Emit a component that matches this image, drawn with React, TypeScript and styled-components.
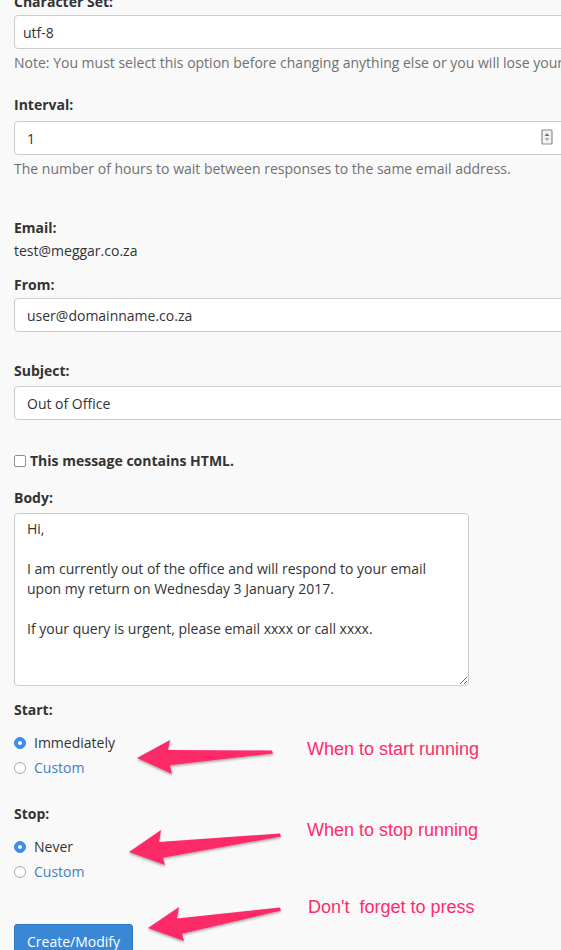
import React from 'react';
import styled, { createGlobalStyle } from 'styled-components';

const GlobalStyle = createGlobalStyle`
  html, body {
    margin: 0;
    padding: 0;
    background: #f9f9f9;
    overflow: hidden;
  }
  body {
    font-family: "Open Sans", "Liberation Sans", sans-serif;
    font-size: 14px;
    line-height: 20px;
    color: #333;
  }
  * { box-sizing: border-box; }
`;

const Page = styled.div`
  position: relative;
  width: 561px;
  height: 950px;
  overflow: hidden;
  padding: 0 0 0 14px;
`;

const Group = styled.div<{ $top?: number }>`
  margin-top: ${(p) => p.$top ?? 0}px;
`;

const Label = styled.div`
  font-weight: 700;
  font-size: 14px;
  line-height: 20px;
  color: #333;
`;

const FieldWrap = styled.div<{ $top?: number }>`
  position: relative;
  margin-top: ${(p) => p.$top ?? 1}px;
  width: 570px;
`;

const TextInput = styled.input<{ $pad?: number }>`
  display: block;
  width: 100%;
  height: 34px;
  padding: 0 ${(p) => p.$pad ?? 12}px;
  font-family: "Open Sans", "Liberation Sans", sans-serif;
  font-size: 14px;
  color: #333;
  background: #fff;
  border: 1px solid #ccc;
  border-radius: 4px;
  outline: none;
`;

const Spinner = styled.svg`
  position: absolute;
  left: 527px;
  top: 8px;
`;

const Help = styled.div<{ $top?: number }>`
  margin-top: ${(p) => p.$top ?? 4}px;
  color: #707070;
  white-space: nowrap;
`;

const Value = styled.div`
  margin-top: 3px;
  color: #333;
`;

const CheckRow = styled.label`
  display: flex;
  align-items: center;
  gap: 4px;
  font-weight: 700;
`;

const CheckBox = styled.span`
  display: inline-block;
  width: 12px;
  height: 12px;
  border: 1px solid #8f8f8f;
  border-radius: 2px;
  background: #fff;
`;

const BodyArea = styled.textarea`
  display: block;
  margin-top: 5px;
  width: 455px;
  height: 173px;
  padding: 5px 12px;
  font-family: "Open Sans", "Liberation Sans", sans-serif;
  font-size: 14px;
  line-height: 20px;
  color: #333;
  background: #fff;
  border: 1px solid #ccc;
  border-radius: 4px;
  resize: both;
  outline: none;
`;

const RadioList = styled.div<{ $top?: number }>`
  margin-top: ${(p) => p.$top ?? 13}px;
  display: flex;
  flex-direction: column;
  gap: 5px;
`;

const RadioRow = styled.label<{ $link?: boolean }>`
  display: flex;
  align-items: center;
  gap: 8px;
  color: ${(p) => (p.$link ? '#3d7ec2' : '#333')};
`;

const RadioDot = styled.span<{ $on?: boolean }>`
  display: inline-block;
  width: 12px;
  height: 12px;
  border-radius: 50%;
  background: ${(p) => (p.$on ? '#3b8ef0' : '#fff')};
  border: 1px solid ${(p) => (p.$on ? '#3b8ef0' : '#a8a8a8')};
  position: relative;
  &::after {
    content: '';
    display: ${(p) => (p.$on ? 'block' : 'none')};
    position: absolute;
    left: 3px;
    top: 3px;
    width: 4px;
    height: 4px;
    border-radius: 50%;
    background: #fff;
  }
`;

const Button = styled.button`
  display: block;
  margin-top: 42px;
  width: 119px;
  height: 34px;
  padding: 0;
  font-family: "Open Sans", "Liberation Sans", sans-serif;
  font-size: 14px;
  color: #fff;
  background: #3a87d5;
  border: 1px solid #2f78c2;
  border-radius: 3px;
`;

const Note = styled.div<{ $x: number; $y: number }>`
  position: absolute;
  left: ${(p) => p.$x}px;
  top: ${(p) => p.$y}px;
  font-family: "Liberation Sans", Arial, sans-serif;
  font-size: 18px;
  line-height: 20px;
  color: #fc2c6b;
  white-space: pre;
`;

const ArrowLayer = styled.svg`
  position: absolute;
  left: 0;
  top: 0;
  pointer-events: none;
`;

type ArrowProps = { tip: [number, number]; tail: [number, number]; up: [number, number]; down: [number, number] };

const Arrow = ({ tip, tail, up, down }: ArrowProps) => {
  // notch points sit a little inside the barbs, shaft tapers toward the tail
  const nx1 = up[0] - 2;
  const ny1 = up[1] + (tip[1] - up[1]) * 0.55;
  const nx2 = down[0] - 2;
  const ny2 = down[1] - (down[1] - tip[1]) * 0.55;
  const d = `M${tip[0]},${tip[1]} L${up[0]},${up[1]} L${nx1},${ny1} L${tail[0]},${tail[1] - 1.5} L${tail[0] + 1},${tail[1] + 1.5} L${nx2},${ny2} L${down[0]},${down[1]} Z`;
  return <path d={d} fill="#fd2a68" filter="url(#arrowShadow)" strokeLinejoin="round" />;
};

const App = () => (
  <>
    <GlobalStyle />
    <Page>
      <Group $top={-8}>
        <Label>Character Set:</Label>
        <FieldWrap $top={3}>
          <TextInput $pad={8} readOnly value="utf-8" />
        </FieldWrap>
        <Help>Note: You must select this option before changing anything else or you will lose your changes.</Help>
      </Group>

      <Group $top={22}>
        <Label>Interval:</Label>
        <FieldWrap $top={6}>
          <TextInput readOnly value="1" />
          <Spinner width="12" height="16" viewBox="0 0 12 16">
            <rect x="1" y="1" width="10" height="14" rx="1" fill="#f4f4f4" stroke="#8a8a8a" strokeWidth="1.2" />
            <path d="M6 4 L8.5 7 L3.5 7 Z" fill="#777" />
            <path d="M6 12 L8.5 9 L3.5 9 Z" fill="#aaa" />
          </Spinner>
        </FieldWrap>
        <Help>The number of hours to wait between responses to the same email address.</Help>
      </Group>

      <Group $top={39}>
        <Label>Email:</Label>
        <Value>test@meggar.co.za</Value>
      </Group>

      <Group $top={14}>
        <Label>From:</Label>
        <FieldWrap $top={3}>
          <TextInput readOnly value="user@domainname.co.za" />
        </FieldWrap>
      </Group>

      <Group $top={29}>
        <Label>Subject:</Label>
        <FieldWrap $top={5}>
          <TextInput readOnly value="Out of Office" />
        </FieldWrap>
      </Group>

      <Group $top={31}>
        <CheckRow>
          <CheckBox />
          This message contains HTML.
        </CheckRow>
      </Group>

      <Group $top={17}>
        <Label>Body:</Label>
        <BodyArea
          readOnly
          value={
            'Hi,\n\nI am currently out of the office and will respond to your email upon my return on Wednesday 3 January 2017.\n\nIf your query is urgent, please email xxxx or call xxxx.'
          }
        />
      </Group>

      <Group $top={14}>
        <Label>Start:</Label>
        <RadioList>
          <RadioRow>
            <RadioDot $on />
            Immediately
          </RadioRow>
          <RadioRow $link>
            <RadioDot />
            Custom
          </RadioRow>
        </RadioList>
      </Group>

      <Group $top={26}>
        <Label>Stop:</Label>
        <RadioList>
          <RadioRow>
            <RadioDot $on />
            Never
          </RadioRow>
          <RadioRow $link>
            <RadioDot />
            Custom
          </RadioRow>
        </RadioList>
      </Group>

      <Button>Create/Modify</Button>

      <ArrowLayer width="561" height="950" viewBox="0 0 561 950">
        <defs>
          <filter id="arrowShadow" x="-10%" y="-30%" width="120%" height="160%">
            <feDropShadow dx="0" dy="1.5" stdDeviation="1.2" floodColor="#000" floodOpacity="0.35" />
          </filter>
        </defs>
        <Arrow tip={[137, 758]} up={[170, 740]} down={[172, 774]} tail={[272, 752]} />
        <Arrow tip={[129, 852]} up={[161, 830]} down={[165, 865]} tail={[280, 835]} />
        <Arrow tip={[148, 928]} up={[179, 907]} down={[184, 941]} tail={[280, 909]} />
      </ArrowLayer>

      <Note $x={307} $y={739}>When to start running</Note>
      <Note $x={307} $y={820}>When to stop running</Note>
      <Note $x={308} $y={897}>{"Don't  forget to press"}</Note>
    </Page>
  </>
);

export default App;
